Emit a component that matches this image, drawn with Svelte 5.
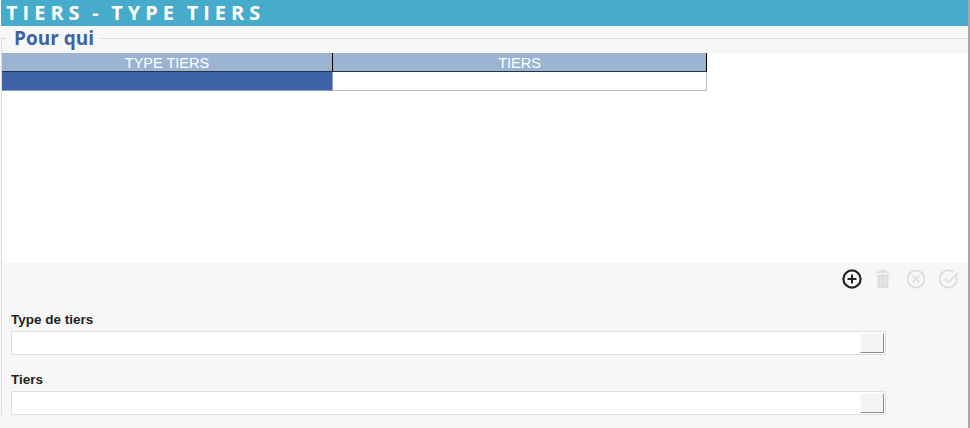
<script>
  let columns = ['TYPE TIERS', 'TIERS'];
  let fields = ['Type de tiers', 'Tiers'];
</script>

<div class="page">
  <h1>TIERS - TYPE TIERS</h1>

  <fieldset>
    <legend>Pour qui</legend>

    <div class="grid-zone">
      <table>
        <thead>
          <tr>
            {#each columns as col}
              <th>{col}</th>
            {/each}
          </tr>
        </thead>
        <tbody>
          <tr>
            <td class="selected"></td>
            <td></td>
          </tr>
        </tbody>
      </table>
    </div>

    <div class="toolbar">
      <svg viewBox="0 0 20 20" class="icon">
        <circle cx="10" cy="10" r="8.6" fill="none" stroke="#222" stroke-width="2.2" />
        <path d="M10 5.5v9M5.5 10h9" stroke="#222" stroke-width="2" fill="none" />
      </svg>
      <svg viewBox="0 0 20 20" class="icon trash">
        <path d="M3 3.2h14M7.5 3V1.5h5V3" stroke="#ddd" stroke-width="1.6" fill="none" />
        <path d="M4.5 5.5h11V19h-11z" fill="#ddd" />
        <path d="M8 8v9M12 8v9" stroke="#eee" stroke-width="1" />
      </svg>
      <svg viewBox="0 0 20 20" class="icon cancel">
        <circle cx="10" cy="10" r="8.5" fill="none" stroke="#ddd" stroke-width="1.8" />
        <path d="M6.8 6.8l6.4 6.4M13.2 6.8l-6.4 6.4" stroke="#ddd" stroke-width="1.8" fill="none" />
      </svg>
      <svg viewBox="0 0 20 20" class="icon">
        <path d="M17.2 7a8.5 8.5 0 1 1-3-3.9" fill="none" stroke="#ddd" stroke-width="1.8" />
        <path d="M5.8 9.5l3.8 3.8 9-9.3" fill="none" stroke="#ddd" stroke-width="1.8" />
      </svg>
    </div>

    <div class="form">
      {#each fields as field}
        <div class="field">
          <span class="label">{field}</span>
          <div class="combo">
            <input type="text" />
            <button type="button" aria-label="Ouvrir"></button>
          </div>
        </div>
      {/each}
    </div>
  </fieldset>
</div>

<style>
  :global(body) {
    margin: 0;
    background: #fff;
  }

  .page {
    width: 970px;
    height: 428px;
    overflow: hidden;
    box-sizing: border-box;
    padding-left: 1px;
    background: #f7f7f7;
    border-right: 2px solid #a8a8a8;
    font-family: "Liberation Sans", Arial, sans-serif;
  }

  h1 {
    margin: 0;
    height: 26px;
    padding-left: 5px;
    background: #47abcb;
    color: #fff;
    font-family: "Open Sans", sans-serif;
    font-size: 20px;
    font-weight: 700;
    line-height: 25px;
    letter-spacing: 5px;
    word-spacing: -2.6px;
    white-space: nowrap;
  }

  fieldset {
    margin: 0;
    padding: 0;
    border: none;
    border-top: 1px solid #dedede;
    border-left: 1px solid #dedede;
  }

  legend {
    margin-left: 4px;
    padding: 0 6px 0 8px;
    color: #3d62a6;
    font-family: "Open Sans", sans-serif;
    font-size: 19px;
    font-weight: 700;
    line-height: 24px;
  }

  .grid-zone {
    height: 210px;
    margin-top: 3px;
    background: #fff;
  }

  table {
    width: 705px;
    table-layout: fixed;
    border-collapse: separate;
    border-spacing: 0;
  }

  th {
    height: 16px;
    padding: 2px 0 0;
    background: #9ab4d2;
    border-right: 1px solid #000;
    border-bottom: 1px solid #26324a;
    color: #fff;
    font-size: 14.5px;
    font-weight: 400;
    line-height: 16px;
  }

  th:first-child {
    width: 330px;
  }

  td {
    height: 18px;
    padding: 0;
    background: #fff;
    border-right: 1px solid #bcbcbc;
    border-bottom: 1px solid #bcbcbc;
  }

  td.selected {
    background: #3d62a6;
    border-right-color: #8d9fc0;
    border-bottom-color: #8d9fc0;
  }

  .toolbar {
    display: flex;
    justify-content: flex-end;
    gap: 12px;
    padding: 6px 9px 0 0;
    height: 26px;
  }

  .icon {
    width: 20px;
    height: 20px;
  }

  .trash {
    margin-right: 1px;
    margin-left: -1px;
  }

  .cancel {
    margin-right: 1px;
  }

  .form {
    display: flex;
    flex-direction: column;
    gap: 17px;
    padding: 17px 0 0 9px;
  }

  .label {
    display: block;
    color: #222;
    font-size: 13.5px;
    font-weight: 700;
    line-height: 16px;
    margin-bottom: 3px;
  }

  .combo {
    display: flex;
    width: 871px;
    height: 20px;
    padding: 1px;
    border: 1px solid #dfdfdf;
    background: #fff;
  }

  input {
    flex: 1;
    min-width: 0;
    padding: 0;
    border: none;
    outline: none;
    background: #fff;
  }

  button {
    width: 24px;
    padding: 0;
    background: #f4f4f4;
    border: 1px solid;
    border-color: #fafafa #8c8c8c #8c8c8c #fafafa;
  }
</style>
